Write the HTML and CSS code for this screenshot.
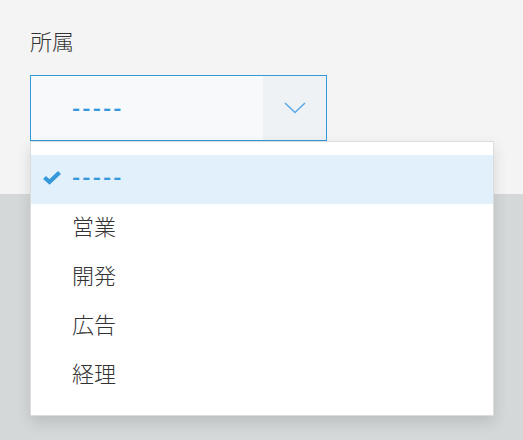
FILE: index.html
```html
<!DOCTYPE html>
<html lang="ja">
<head>
<meta charset="utf-8">
<link rel="stylesheet" href="styles.css">
</head>
<body>
<div class="page">
  <section class="panel">
    <div class="label">所属</div>
    <div class="select">
      <div class="select-value">-----</div>
      <div class="select-button">
        <svg width="22" height="12" viewBox="0 0 22 12"><polyline points="1,1 11,10.5 21,1" fill="none" stroke="#5aa9e6" stroke-width="1.6"/></svg>
      </div>
    </div>
  </section>
  <section class="backdrop"></section>
  <ul class="menu">
    <li class="item selected">
      <svg class="check" width="20" height="15" viewBox="0 0 20 15"><polyline points="2.5,7.5 7.5,12 17.5,2.5" fill="none" stroke="#3498db" stroke-width="4.2" stroke-linejoin="miter" stroke-linecap="butt"/></svg>
      <span class="dash">-----</span>
    </li>
    <li class="item">営業</li>
    <li class="item">開発</li>
    <li class="item">広告</li>
    <li class="item">経理</li>
  </ul>
</div>
</body>
</html>
```

FILE: styles.css
```css
html, body {
  margin: 0;
  padding: 0;
}
body {
  font-family: "Noto Sans CJK JP", "Noto Sans", sans-serif;
  color: #333333;
  width: 523px;
  height: 440px;
  overflow: hidden;
}
.page {
  position: relative;
  height: 440px;
  display: flex;
  flex-direction: column;
}
.panel {
  background: #f4f4f4;
  height: 194px;
  padding: 25px 0 0 30px;
  box-sizing: border-box;
}
.label {
  font-size: 22px;
  line-height: 30px;
  font-weight: 300;
}
.select {
  margin-top: 20px;
  width: 297px;
  height: 66px;
  box-sizing: border-box;
  border: 1px solid #3498db;
  background: #f7f9fa;
  display: flex;
}
.select-value {
  flex: 1;
  display: flex;
  align-items: center;
  padding-left: 41px;
  padding-bottom: 4px;
  color: #3498db;
  font-size: 22px;
  letter-spacing: 2.2px;
  font-weight: 700;
}
.select-button {
  width: 63px;
  background: #eef2f5;
  display: flex;
  align-items: center;
  justify-content: center;
}
.backdrop {
  flex: 1;
  background: #d4d8d8;
}
.menu {
  position: absolute;
  left: 30px;
  top: 141px;
  width: 464px;
  height: 275px;
  box-sizing: border-box;
  margin: 0;
  padding: 13px 0 0 0;
  list-style: none;
  background: #ffffff;
  border: 1px solid #dcdcdc;
  box-shadow: 0 6px 14px rgba(0, 0, 0, 0.12);
}
.item {
  height: 49px;
  box-sizing: border-box;
  display: flex;
  align-items: center;
  padding-left: 41px;
  padding-bottom: 7px;
  font-size: 22px;
  font-weight: 300;
  position: relative;
}
.item.selected {
  background: #e2f0fc;
  padding-bottom: 10px;
}
.check {
  position: absolute;
  left: 11px;
  top: 15px;
}
.dash {
  color: #3498db;
  letter-spacing: 2.2px;
  font-weight: 700;
}
```
